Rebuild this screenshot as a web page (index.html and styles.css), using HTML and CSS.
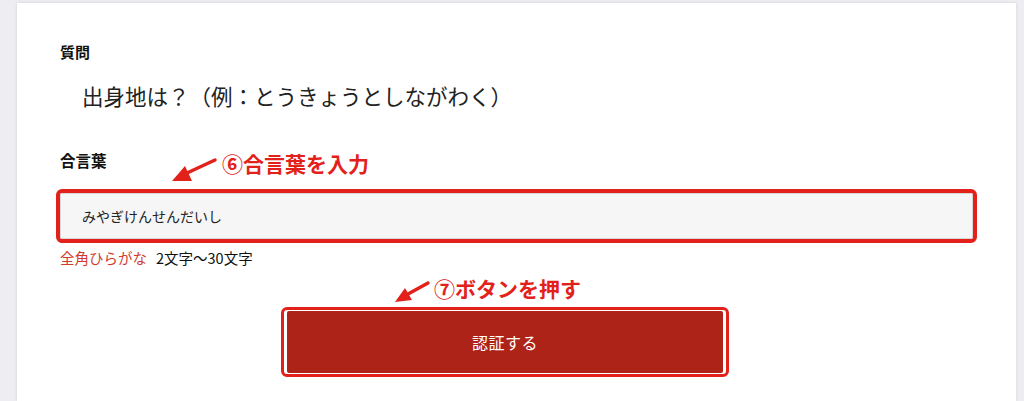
FILE: index.html
```html
<!DOCTYPE html>
<html lang="ja">
<head>
    <meta charset="UTF-8">
    <meta name="viewport" content="width=device-width, initial-scale=1.0">
    <title>合言葉認証</title>
    <link rel="stylesheet" href="styles.css">
</head>
<body>
    <div class="page">
        <div class="card">
            <div class="label">質問</div>
            <div class="question">出身地は？（例：とうきょうとしながわく）</div>

            <div class="label label-answer">合言葉</div>
            <div class="mark-input">
                <input type="text" class="answer" value="みやぎけんせんだいし">
            </div>
            <div class="hint"><span class="hint-kind">全角ひらがな</span>2文字〜30文字</div>

            <div class="mark-button">
                <button class="submit">認証する</button>
            </div>
        </div>

        <span class="note note-input">⑥合言葉を入力</span>
        <span class="note note-button">⑦ボタンを押す</span>

        <svg class="arrows" width="1024" height="401" viewBox="0 0 1024 401">
            <line x1="215" y1="160" x2="187" y2="173" />
            <polygon points="172,181 192,181 185,166" />
            <line x1="428" y1="283" x2="408" y2="294" />
            <polygon points="395,302 412,300 405,288" />
        </svg>
    </div>
</body>
</html>
```

FILE: styles.css
```css
body {
    margin: 0;
    background: #ededf2;
    font-family: "Noto Sans CJK JP", "Noto Sans", sans-serif;
    color: #111;
}
.page {
    position: relative;
    width: 1024px;
    height: 401px;
    overflow: hidden;
}
.card {
    margin: 3px 0 0 17px;
    width: 999px;
    height: 398px;
    box-sizing: border-box;
    padding: 38px 43px 0 43px;
    background: #fff;
    box-shadow: 0 0 3px rgba(0, 0, 0, 0.12);
}
.label {
    font-size: 15px;
    font-weight: bold;
    line-height: 22px;
}
.question {
    margin-top: 18px;
    padding-left: 22px;
    font-size: 21.5px;
    line-height: 30px;
    color: #222;
}
.label-answer {
    margin-top: 38px;
    font-size: 15.5px;
}
.mark-input {
    margin: 18px -4px 0 -4px;
    border: 4px solid #e3211b;
    border-radius: 6px;
}
.answer {
    display: block;
    width: 100%;
    height: 46px;
    box-sizing: border-box;
    margin: 0;
    padding: 0 0 0 21px;
    border: 1px solid #d6d6d6;
    border-radius: 2px;
    background: #f6f6f6;
    font-family: inherit;
    font-size: 14px;
    color: #222;
}
.hint {
    margin-top: 5px;
    font-size: 14.5px;
    line-height: 20px;
}
.hint-kind {
    color: #d23a2e;
    margin-right: 9px;
}
.mark-button {
    width: 436px;
    margin: 39px 0 0 221px;
    border: 3px solid #e3211b;
    border-radius: 6px;
    padding: 1px 3px;
}
.submit {
    display: block;
    width: 100%;
    height: 62px;
    border: none;
    border-radius: 2px;
    background: #ad2318;
    color: #fff;
    font-family: inherit;
    font-size: 16px;
    letter-spacing: 0.5px;
}
.note {
    position: absolute;
    color: #e3211b;
    font-size: 21px;
    font-weight: bold;
    line-height: 26px;
}
.note-input {
    left: 222px;
    top: 150px;
}
.note-button {
    left: 434px;
    top: 275px;
}
.arrows {
    position: absolute;
    left: 0;
    top: 0;
    pointer-events: none;
}
.arrows line {
    stroke: #e3211b;
    stroke-width: 3.5;
    stroke-linecap: round;
}
.arrows polygon {
    fill: #e3211b;
}
```
